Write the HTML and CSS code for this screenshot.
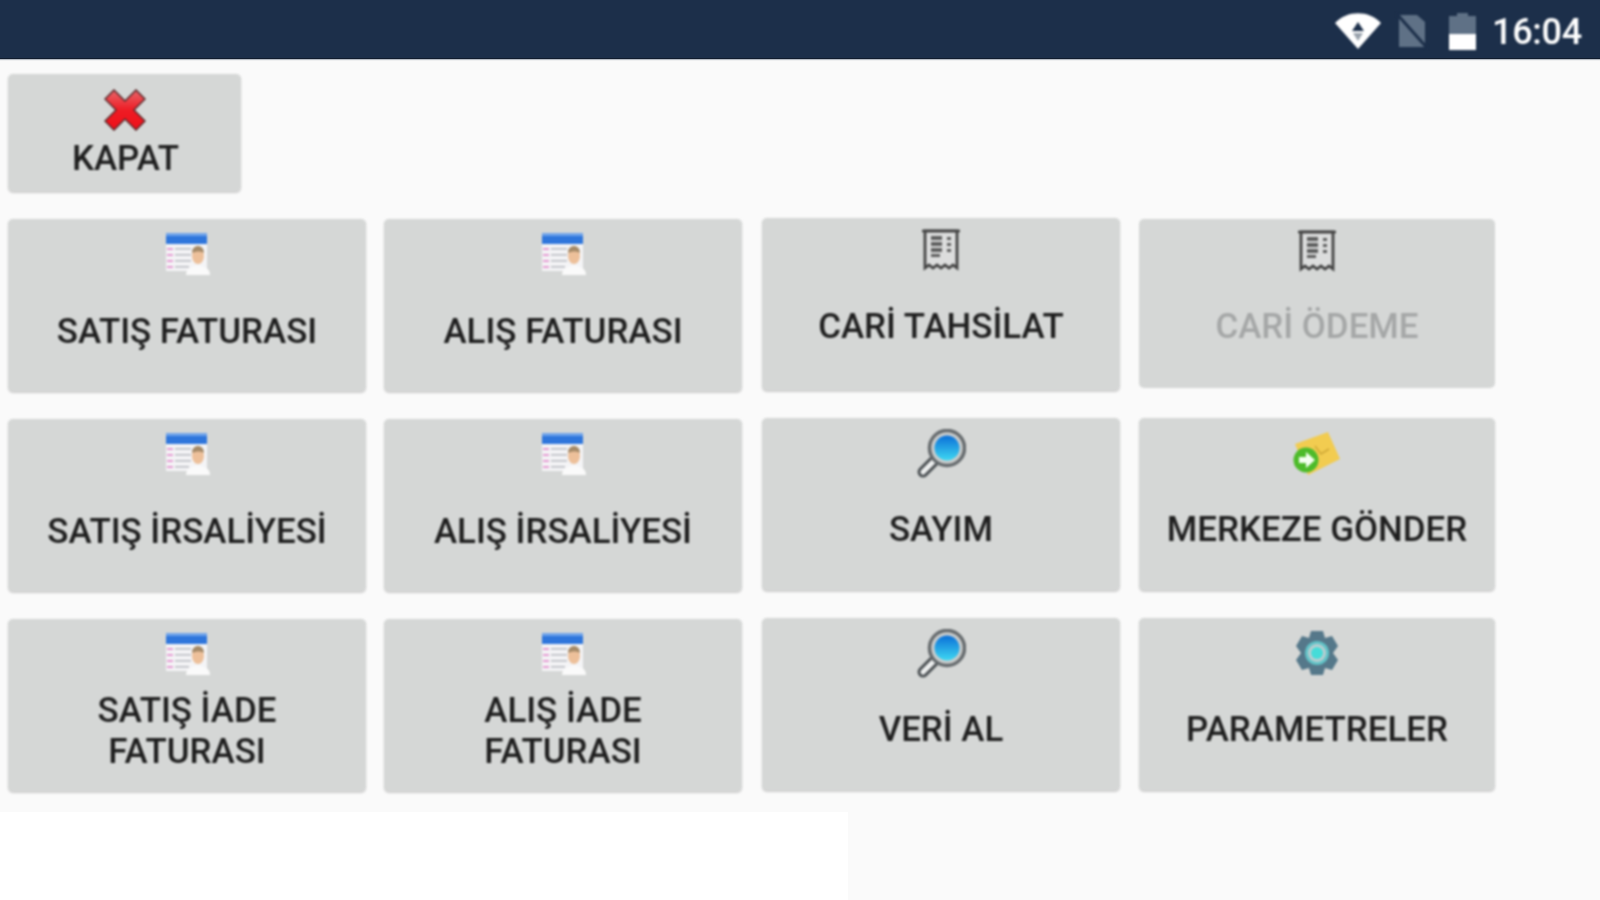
FILE: index.html
```html
<!DOCTYPE html>
<html lang="tr">
<head>
<meta charset="utf-8">
<title>Menü</title>
<link rel="stylesheet" href="styles.css">
</head>
<body>
<svg class="defs" width="0" height="0" aria-hidden="true">
  <defs>
    <linearGradient id="lens" x1="0" y1="0" x2="0" y2="1">
      <stop offset="0" stop-color="#0a6fd8"/><stop offset="1" stop-color="#3fd8f2"/>
    </linearGradient>
    <linearGradient id="red" x1="0" y1="0" x2="0" y2="1">
      <stop offset="0" stop-color="#e8676b"/><stop offset=".5" stop-color="#ee1c25"/><stop offset="1" stop-color="#f01018"/>
    </linearGradient>
    <symbol id="i-card" viewBox="0 0 44 42">
      <rect x="0" y="0" width="41" height="38" fill="#f4f4f6"/>
      <rect x="0" y="0" width="41" height="11" fill="#2f76dc"/>
      <rect x="0" y="0" width="41" height="3" fill="#6fa3ea"/>
      <g fill="#e59ad2"><rect x="1" y="15" width="6" height="2"/><rect x="1" y="21" width="6" height="2"/><rect x="1" y="27" width="6" height="2"/><rect x="1" y="33" width="6" height="2"/></g>
      <g fill="#b9bcc2"><rect x="9" y="15" width="16" height="1.6"/><rect x="9" y="21" width="16" height="1.6"/><rect x="9" y="27" width="16" height="1.6"/><rect x="9" y="33" width="14" height="1.6"/></g>
      <path d="M20 42c0-7 6-9 12-9s12 2 12 9z" fill="#fafafa"/>
      <ellipse cx="32" cy="23" rx="6" ry="8" fill="#edc09a"/>
      <path d="M26 20c0-5 3-7 6-7s6 2 6 7c-3-2-8-2-12 0z" fill="#a58a68"/>
    </symbol>
    <symbol id="i-receipt" viewBox="0 0 40 42">
      <path d="M1 2h38" stroke="#444" stroke-width="2.5"/>
      <path d="M4 2v37l4-3 4 3 4-3 4 3 4-3 4 3 4-3 4 3V2z" fill="#dcdddd" stroke="#444" stroke-width="2.8"/>
      <g fill="#5e5e5e"><rect x="10" y="7" width="11" height="4"/><rect x="10" y="13" width="11" height="4"/><rect x="10" y="19" width="11" height="4"/><rect x="10" y="25" width="9" height="3"/></g>
      <g fill="#5e5e5e"><rect x="26" y="8" width="4" height="3"/><rect x="26" y="14" width="4" height="3"/><rect x="26" y="20" width="4" height="3"/></g>
    </symbol>
    <symbol id="i-search" viewBox="0 0 50 50">
      <path d="M7 43 18 32" stroke="#4f5457" stroke-width="11" stroke-linecap="round"/>
      <path d="M7 43 18 32" stroke="#eceeee" stroke-width="5" stroke-linecap="round"/>
      <circle cx="31" cy="19" r="17.5" fill="#c9cccc" stroke="#666b6e" stroke-width="3.5"/>
      <circle cx="31" cy="19" r="12.5" fill="url(#lens)"/>
    </symbol>
    <symbol id="i-send" viewBox="0 0 48 44">
      <path d="M2 12 35 0l12 27-32 16z" fill="#f2cc50"/>
      <path d="M22 14l6 8 8-5" fill="none" stroke="#cfa836" stroke-width="1.5"/>
      <circle cx="13" cy="28" r="12.5" fill="#4dbb2a"/>
      <path d="M6 25h7v-5l9 8-9 8v-5H6z" fill="#f4fff0"/>
    </symbol>
    <symbol id="i-gear" viewBox="0 0 44 46">
      <path d="M16 1h12l2 7 7-2 6 10-5 7 5 7-6 10-7-2-2 7H16l-2-7-7 2-6-10 5-7-5-7L7 6l7 2z" fill="#55788a"/>
      <circle cx="22" cy="23" r="12" fill="#62c4c8"/>
      <circle cx="22" cy="23" r="9" fill="#bccdd0"/>
      <circle cx="22" cy="23" r="6" fill="#45dcd8"/>
    </symbol>
  </defs>
</svg>
<div class="screen">
  <header class="status">
    <svg class="st-wifi" viewBox="0 0 46 36"><path d="M0 10C12-3 34-3 46 10L23 36z" fill="#fff"/><path d="M23 9l6 9H17z" fill="#1c2f4a"/><path d="M18 20h10l-5 8z" fill="#9aa3ad"/></svg>
    <svg class="st-sim" viewBox="0 0 32 36"><path d="M3 2h18l8 7v25H3z" fill="#5f7186"/><path d="M0 0 32 36" stroke="#1c2f4a" stroke-width="3"/></svg>
    <svg class="st-bat" viewBox="0 0 27 37"><path d="M8 0h11v3h8v34H0V3h8z" fill="#5f7186"/><rect y="21" width="27" height="16" fill="#fff"/></svg>
    <span class="clock">16:04</span>
  </header>
  <main class="content">
    <div class="top-row">
      <button class="btn btn-close">
        <svg class="ic-x" viewBox="0 0 42 42"><path d="M10 1 21 12 32 1l9 9-11 11 11 11-9 9-11-11-11 11-9-9 11-11L1 10z" fill="url(#red)" stroke="#5b2a2c" stroke-width="1.5"/></svg>
        <span class="label">KAPAT</span>
      </button>
    </div>
    <div class="cols">
      <div class="col col-a">
        <button class="btn btn-a"><svg class="ic-card"><use href="#i-card"/></svg><span class="label">SATIŞ FATURASI</span></button>
        <button class="btn btn-a"><svg class="ic-card"><use href="#i-card"/></svg><span class="label">SATIŞ İRSALİYESİ</span></button>
        <button class="btn btn-a"><svg class="ic-card"><use href="#i-card"/></svg><span class="label">SATIŞ İADE<br>FATURASI</span></button>
      </div>
      <div class="col col-a">
        <button class="btn btn-a"><svg class="ic-card"><use href="#i-card"/></svg><span class="label">ALIŞ FATURASI</span></button>
        <button class="btn btn-a"><svg class="ic-card"><use href="#i-card"/></svg><span class="label">ALIŞ İRSALİYESİ</span></button>
        <button class="btn btn-a"><svg class="ic-card"><use href="#i-card"/></svg><span class="label">ALIŞ İADE<br>FATURASI</span></button>
      </div>
      <div class="col col-c">
        <button class="btn btn-b"><svg class="ic-receipt"><use href="#i-receipt"/></svg><span class="label">CARİ TAHSİLAT</span></button>
        <button class="btn btn-b"><svg class="ic-search"><use href="#i-search"/></svg><span class="label">SAYIM</span></button>
        <button class="btn btn-b"><svg class="ic-search"><use href="#i-search"/></svg><span class="label">VERİ AL</span></button>
      </div>
      <div class="col col-d">
        <button class="btn btn-b btn-off"><svg class="ic-receipt"><use href="#i-receipt"/></svg><span class="label">CARİ ÖDEME</span></button>
        <button class="btn btn-b"><svg class="ic-send"><use href="#i-send"/></svg><span class="label">MERKEZE GÖNDER</span></button>
        <button class="btn btn-b"><svg class="ic-gear"><use href="#i-gear"/></svg><span class="label">PARAMETRELER</span></button>
      </div>
    </div>
  </main>
  <div class="blank"></div>
</div>
</body>
</html>
```
FILE: styles.css
```css
* { box-sizing: border-box; }
html, body { margin: 0; height: 100%; background: #fafafa; }
body { overflow: hidden; }
.defs { display: block; height: 0; }
.screen {
  width: 1600px; height: 900px; display: flex; flex-direction: column;
  font-family: Roboto, "Liberation Sans", sans-serif;
}
.status {
  height: 59px; flex: none; background: #1c2f4a; border-bottom: 1px solid #101c2e;
  box-shadow: 0 1px 1px rgba(28, 47, 74, .3);
  display: flex; align-items: center; justify-content: flex-end; padding: 4px 20px 0 0;
}
.status > * { filter: blur(.9px); }
.st-wifi { width: 46px; height: 36px; margin-right: 15px; }
.st-sim { width: 32px; height: 36px; margin-right: 21px; }
.st-bat { width: 27px; height: 37px; margin-right: 16px; }
.clock { color: #fff; font-size: 36px; font-weight: 500; width: 88px; letter-spacing: -.3px; padding-top: 2px; }
.content { flex: none; height: 753px; padding: 15px 0 0 8px; filter: blur(.9px); }
.top-row { height: 118px; margin-bottom: 27px; }
.cols { display: flex; }
.col { display: flex; flex-direction: column; flex: none; }
.col-a { width: 358px; margin-right: 18px; gap: 28px; }
.col-a + .col-a { margin-right: 20px; }
.col-c { width: 358px; margin: -1px 19px 0 0; gap: 28px; }
.col-d { width: 356px; gap: 28px; }
.btn {
  border: 0; margin: 0; background: #d5d7d6; border-radius: 5px; color: #1f1f1f;
  display: flex; flex-direction: column; align-items: center; font: inherit;
  box-shadow: 0 1.5px 2px rgba(0, 0, 0, .18); padding: 0;
}
.label { flex: 1; display: flex; align-items: center; justify-content: center; text-align: center; font-size: 34.9px; line-height: 41px; font-weight: 500; }
.btn-close { width: 233px; height: 117px; padding: 15px 0 5px; }
.btn-close .label { line-height: 40px; padding-left: 2px; }
.ic-x { width: 42px; height: 42px; flex: none; }
.btn-a { height: 172px; padding: 14px 0 4px; }
.btn-b { height: 172px; padding: 9px 0 9px; }
.btn-off { height: 169px; margin-bottom: 2px; padding-top: 11px; color: #a5a7a7; box-shadow: none; padding-bottom: 8px; }
.ic-card { width: 44px; height: 42px; flex: none; margin-left: 2px; }
.ic-receipt { width: 40px; height: 42px; flex: none; margin-top: 2px; }
.ic-search { width: 50px; height: 50px; flex: none; margin-top: 2px; margin-bottom: -2px; }
.ic-send { width: 48px; height: 44px; flex: none; margin-top: 5px; margin-bottom: 1px; }
.ic-gear { width: 44px; height: 46px; flex: none; margin-top: 3px; margin-bottom: 1px; }
.btn-off .ic-receipt { margin-top: 0; }
.blank { width: 848px; flex: 1; background: #fff; }
```
